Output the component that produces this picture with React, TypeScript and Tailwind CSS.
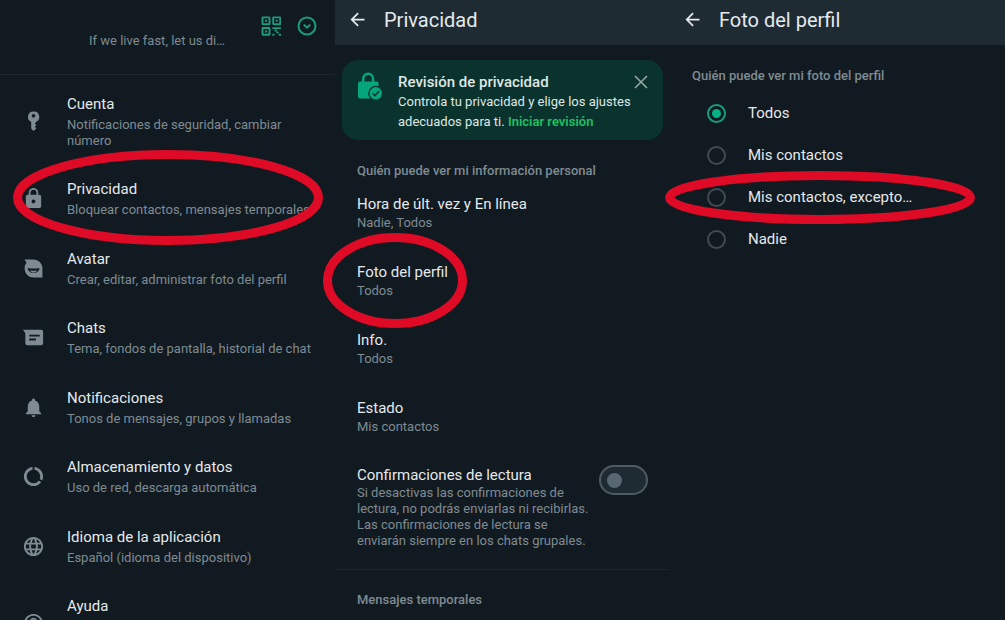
import { useState } from 'react';
import type { ReactNode } from 'react';
import { clsx } from 'clsx';
import { MdArrowBack, MdDataUsage, MdHelpOutline, MdLanguage, MdLock, MdNotifications } from 'react-icons/md';

const KeyIcon = () => (
    <svg viewBox="0 0 24 24" className="h-[23px] w-[23px]" fill="currentColor" aria-hidden="true">
        <path
            fillRule="evenodd"
            d="M12 1.600a5.700 5.700 0 0 0-2.400 10.900v6.900L12 22l2.900-2.800-1.500-1.700 1.500-1.600-1.300-1.400.8-1.900A5.700 5.700 0 0 0 12 1.600Zm0 2.600a1.900 1.900 0 1 1 0 3.800 1.900 1.900 0 0 1 0-3.800Z"
        />
    </svg>
);

const AvatarIcon = () => (
    <svg viewBox="0 0 24 24" className="h-[23px] w-[23px]" fill="currentColor" aria-hidden="true">
        <path
            fillRule="evenodd"
            d="M2.500 2.500H12a9.300 9.300 0 0 1 9.300 9.300v9.700H12A9.300 9.300 0 0 1 2.700 12c0-2.200.7-4.300 2-5.900L2.500 2.500ZM5.800 11.500a6.400 6.400 0 0 0 12.600 0c-4 .8-8.600.8-12.600 0Zm2.500 2.500c2.500.4 5.100.4 7.600 0-1.800 3-5.800 3-7.600 0Z"
        />
    </svg>
);

const ChatIcon = () => (
    <svg viewBox="0 0 24 24" className="h-[23px] w-[23px]" fill="currentColor" aria-hidden="true">
        <path
            fillRule="evenodd"
            d="M1 4h19a2 2 0 0 1 2 2v12a2 2 0 0 1-2 2H5.500a2 2 0 0 1-2-2V7.500L1 4ZM7.500 9v2h11V9h-11Zm0 4v2h7v-2h-7Z"
        />
    </svg>
);

const QrIcon = () => (
    <svg viewBox="0 0 20 20" className="h-5 w-5" aria-hidden="true">
        <g fill="none" stroke="currentColor" strokeWidth="1.900">
            <rect x="1.500" y="1.400" width="7" height="6.800" rx=".5" />
            <rect x="12.200" y="1.400" width="7" height="6.800" rx=".5" />
            <rect x="1.500" y="12" width="7" height="6.800" rx=".5" />
        </g>
        <g fill="currentColor">
            <path d="M4 3.800h2v2H4zM14.700 3.800h2v2h-2zM4 14.400h2v2H4z" />
            <path d="M11.300 11.200h8.600V13h-8.600zM13.600 13.600h2.200v2h-2.200zM11.300 17.700h2.200v2h-2.200zM15.400 15.600h2.200v2h-2.200zM17.800 17.700H20v2h-2.200z" />
        </g>
    </svg>
);

const CircleDownIcon = () => (
    <svg viewBox="0 0 20 20" className="h-5 w-5" fill="none" stroke="currentColor" strokeWidth="2" aria-hidden="true">
        <circle cx="10" cy="10" r="8.500" />
        <path d="m6.800 8.600 3.200 3.100 3.200-3.100" />
    </svg>
);

const LockCheckIcon = () => (
    <svg viewBox="0 0 26 28" className="h-7 w-[26px]" aria-hidden="true">
        <path d="M6.200 11V6.600a4.900 4.900 0 0 1 9.800 0V11" fill="none" stroke="#06a67d" strokeWidth="2.400" />
        <rect x="1" y="9.500" width="20.500" height="17" rx="2" fill="#06a67d" />
        <circle cx="18.800" cy="21.300" r="7.600" fill="#0b332d" />
        <circle cx="18.800" cy="21.300" r="6.200" fill="#06a67d" />
        <path d="m15.800 21.400 2.200 2.200 4-4.300" fill="none" stroke="#0b332d" strokeWidth="1.500" />
    </svg>
);

const CloseIcon = () => (
    <svg viewBox="0 0 14 14" className="h-3.5 w-3.5" fill="none" stroke="currentColor" strokeWidth="1.500" aria-hidden="true">
        <path d="m1 1 12 12M13 1 1 13" />
    </svg>
);

// Hand-drawn style marker that circles the option to tap
const Ring = ({ width, height, className }: { width: number; height: number; className: string }) => (
    <svg
        viewBox={`0 0 ${width} ${height}`}
        className={clsx('pointer-events-none absolute z-10 max-w-none', className)}
        fill="none"
        aria-hidden="true"
    >
        <ellipse
            cx={width / 2}
            cy={height / 2}
            rx={width / 2 - 4.5}
            ry={height / 2 - 4.5}
            stroke="#de0a26"
            strokeWidth="9"
        />
    </svg>
);

const settings = [
    { title: 'Cuenta', detail: 'Notificaciones de seguridad, cambiar número', icon: <KeyIcon /> },
    { title: 'Privacidad', detail: 'Bloquear contactos, mensajes temporales', icon: <MdLock size={23} />, marked: true },
    { title: 'Avatar', detail: 'Crear, editar, administrar foto del perfil', icon: <AvatarIcon /> },
    { title: 'Chats', detail: 'Tema, fondos de pantalla, historial de chat', icon: <ChatIcon /> },
    { title: 'Notificaciones', detail: 'Tonos de mensajes, grupos y llamadas', icon: <MdNotifications size={23} /> },
    { title: 'Almacenamiento y datos', detail: 'Uso de red, descarga automática', icon: <MdDataUsage size={23} /> },
    { title: 'Idioma de la aplicación', detail: 'Español (idioma del dispositivo)', icon: <MdLanguage size={23} /> },
    { title: 'Ayuda', detail: '', icon: <MdHelpOutline size={23} /> },
];

const privacyItems = [
    { title: 'Hora de últ. vez y En línea', detail: 'Nadie, Todos' },
    { title: 'Foto del perfil', detail: 'Todos', marked: true },
    { title: 'Info.', detail: 'Todos' },
    { title: 'Estado', detail: 'Mis contactos' },
];

const audiences = ['Todos', 'Mis contactos', 'Mis contactos, excepto…', 'Nadie'];

const TopBar = ({ children }: { children: ReactNode }) => (
    <header className="flex h-[45px] items-center gap-4 bg-[#1f2b33] pb-1.5 pl-3 text-[#e4e9ec]">
        <button type="button" aria-label="Atrás">
            <MdArrowBack size={21} />
        </button>
        <h1 className="text-xl leading-6">{children}</h1>
    </header>
);

const SettingsPanel = () => (
    <section className="min-w-0">
        <div className="flex h-[75px] items-start border-b border-[#1c262d] pl-[89px] pr-[18px] pt-4">
            <p className="mt-[17px] flex-1 truncate text-[13px] leading-4">If we live fast, let us di…</p>
            <div className="flex gap-4 text-[#1b9c7c]">
                <button type="button" aria-label="Código QR">
                    <QrIcon />
                </button>
                <button type="button" aria-label="Cambiar cuenta">
                    <CircleDownIcon />
                </button>
            </div>
        </div>
        <ul className="pt-1">
            {settings.map((item) => (
                <li key={item.title} className="relative even:pb-px">
                    <button type="button" className="flex w-full items-center py-[15px] text-left">
                        <span className="flex w-[67px] shrink-0 justify-center">{item.icon}</span>
                        <span className="flex flex-1 flex-col gap-[3px] pr-5">
                            <span className="text-[15px] leading-5 text-[#e4e9ec]">{item.title}</span>
                            <span className={clsx('text-[13px] leading-4', !item.detail && 'min-h-8')}>{item.detail}</span>
                        </span>
                    </button>
                    {item.marked && <Ring width={310} height={95} className="-top-3.5 left-[13px] h-[95px] w-[310px]" />}
                </li>
            ))}
        </ul>
    </section>
);

const PrivacyPanel = () => {
    const [showCard, setShowCard] = useState(true);
    const [receipts, setReceipts] = useState(false);

    return (
        <section className="min-w-0">
            <TopBar>Privacidad</TopBar>
            {showCard && (
                <div className="mx-[7px] mt-[15px] flex h-20 items-start rounded-2xl bg-[#0b332d] px-[15px] pt-3">
                    <LockCheckIcon />
                    <div className="ml-[15px] flex-1 text-[#dfe7e6]">
                        <h2 className="text-[15px] font-medium leading-5">Revisión de privacidad</h2>
                        <p className="text-[13px] leading-5">
                            Controla tu privacidad y elige los ajustes adecuados para ti.{' '}
                            <a href="#revision" className="font-semibold text-[#1fc063]">
                                Iniciar revisión
                            </a>
                        </p>
                    </div>
                    <button type="button" aria-label="Cerrar" className="mt-[3px] text-[#9aaaa8]" onClick={() => setShowCard(false)}>
                        <CloseIcon />
                    </button>
                </div>
            )}
            <h2 className="mt-[23px] px-[22px] text-[13px] font-medium leading-4">Quién puede ver mi información personal</h2>
            <ul>
                {privacyItems.map((item) => (
                    <li key={item.title} className="relative">
                        <button type="button" className="flex w-full flex-col gap-px px-[22px] pb-4 pt-[15px] text-left">
                            <span className="text-[15px] leading-5 text-[#e4e9ec]">{item.title}</span>
                            <span className="text-[13px] leading-4">{item.detail}</span>
                        </button>
                        {item.marked && <Ring width={144} height={95} className="-left-3 -top-3.5 h-[95px] w-36" />}
                    </li>
                ))}
            </ul>
            <label className="flex items-start justify-between border-b border-[#1c262d] px-[22px] pb-5 pt-3.5">
                <span className="flex w-[236px] flex-col">
                    <span className="text-[15px] leading-5 text-[#e4e9ec]">Confirmaciones de lectura</span>
                    <span className="text-[13px] leading-4">
                        Si desactivas las confirmaciones de lectura, no podrás enviarlas ni recibirlas. Las confirmaciones de
                        lectura se enviarán siempre en los chats grupales.
                    </span>
                </span>
                <input
                    type="checkbox"
                    role="switch"
                    checked={receipts}
                    onChange={(e) => setReceipts(e.target.checked)}
                    className="flex h-[30px] w-[49px] appearance-none items-center rounded-full border-2 border-[#4f5b62] bg-[#1f2b33] px-1.5 before:h-[15px] before:w-[15px] before:rounded-full before:bg-[#586870] checked:justify-end checked:before:bg-[#06a67d]"
                />
            </label>
            <h2 className="mt-[22px] px-[22px] text-[13px] font-medium leading-4">Mensajes temporales</h2>
        </section>
    );
};

const PhotoPanel = () => {
    const [audience, setAudience] = useState('Todos');

    return (
        <section className="min-w-0">
            <TopBar>Foto del perfil</TopBar>
            <fieldset className="pt-[23px]">
                <legend className="float-left mb-2 w-full px-[22px] text-[13px] font-medium leading-4">
                    Quién puede ver mi foto del perfil
                </legend>
                {audiences.map((name) => (
                    <label key={name} className="relative flex h-[42px] w-full items-center gap-[22px] pl-[37px] text-[15px] leading-5 text-[#e4e9ec]">
                        <input
                            type="radio"
                            name="audience"
                            value={name}
                            checked={audience === name}
                            onChange={() => setAudience(name)}
                            className="flex h-[19px] w-[19px] appearance-none items-center justify-center rounded-full border-2 border-[#3f4a51] before:h-[9px] before:w-[9px] before:rounded-full checked:border-[#1b9c7c] checked:before:bg-[#06b184]"
                        />
                        {name}
                        {name === 'Mis contactos, excepto…' && (
                            <Ring width={310} height={53} className="-left-[5px] -top-[5px] h-[53px] w-[310px]" />
                        )}
                    </label>
                ))}
            </fieldset>
        </section>
    );
};

const App = () => (
    <main className="grid h-screen grid-cols-3 overflow-hidden bg-[#121a21] font-[Roboto,sans-serif] text-[#7e8b92]">
        <SettingsPanel />
        <PrivacyPanel />
        <PhotoPanel />
    </main>
);

export default App;
